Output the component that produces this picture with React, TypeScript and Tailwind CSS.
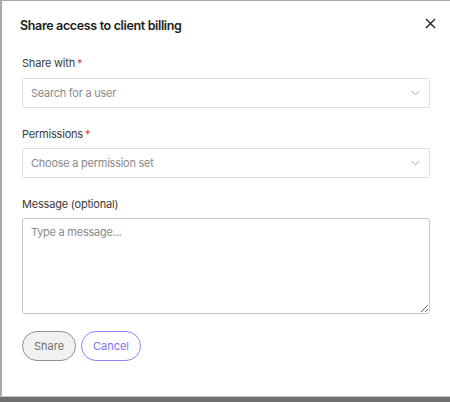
import React from "react";

export default function App() {
  return (
    <div
      className="w-[450px] h-[402px] flex flex-col bg-white"
      style={{ fontFamily: "Inter, 'Noto Sans', sans-serif" }}
    >
      <div className="flex-1 flex flex-col border-l-2 border-t border-[#a9a9a9] bg-white">
        <div className="flex items-start justify-between pl-[18px] pr-[14px] pt-[15px]">
          <h1 className="text-[12.5px] leading-[20px] font-semibold text-[#1c1c1c] tracking-[-0.35px]">
            Share access to client billing
          </h1>
          <button className="mt-[1px] w-[12px] h-[12px] flex items-center justify-center">
            <svg width="11" height="11" viewBox="0 0 11 11">
              <path d="M1 1L10 10M10 1L1 10" stroke="#222" strokeWidth="1.4" />
            </svg>
          </button>
        </div>

        <div className="px-[20px] flex flex-col">
          <label className="mt-[19px] text-[11px] leading-[16px] text-[#3b3b3b] tracking-[-0.2px]">
            Share with<span className="text-[#e53935] ml-[2px]">*</span>
          </label>
          <div className="mt-[7px] h-[30px] border border-[#dedede] rounded-[3px] flex items-center justify-between pl-[8px] pr-[9px]">
            <span className="text-[11px] text-[#8a8a8a] tracking-[-0.25px]">Search for a user</span>
            <svg width="9" height="6" viewBox="0 0 9 6">
              <path d="M0.5 0.8L4.5 4.8L8.5 0.8" stroke="#a0a0a0" strokeWidth="1" fill="none" />
            </svg>
          </div>

          <label className="mt-[18px] text-[11px] leading-[16px] text-[#3b3b3b] tracking-[-0.2px]">
            Permissions<span className="text-[#e53935] ml-[2px]">*</span>
          </label>
          <div className="mt-[6px] h-[30px] border border-[#dedede] rounded-[3px] flex items-center justify-between pl-[8px] pr-[9px]">
            <span className="text-[11px] text-[#8a8a8a] tracking-[-0.25px]">Choose a permission set</span>
            <svg width="9" height="6" viewBox="0 0 9 6">
              <path d="M0.5 0.8L4.5 4.8L8.5 0.8" stroke="#a0a0a0" strokeWidth="1" fill="none" />
            </svg>
          </div>

          <label className="mt-[18px] text-[11px] leading-[16px] text-[#3b3b3b] tracking-[-0.2px]">
            Message (optional)
          </label>
          <textarea
            placeholder="Type a message..."
            className="mt-[6px] h-[96px] border border-[#c9c9c9] rounded-[3px] px-[8px] py-[5px] text-[11px] text-[#333] placeholder:text-[#8a8a8a] tracking-[-0.25px] outline-none"
            style={{ fontFamily: "Inter, 'Noto Sans', sans-serif" }}
          />

          <div className="mt-[17px] flex gap-[5px]">
            <button className="h-[30px] w-[54px] rounded-full border border-[#8f8f8f] bg-[#f1f1f1] text-[11px] text-[#707070]">
              Share
            </button>
            <button className="h-[30px] w-[60px] rounded-full border border-[#8d83fb] bg-white text-[11px] text-[#7a6ff5]">
              Cancel
            </button>
          </div>
        </div>
      </div>
      <div className="h-[1px] bg-[#c4c4c4]" />
      <div className="h-[5px] bg-[#6f6f6f]" />
    </div>
  );
}
